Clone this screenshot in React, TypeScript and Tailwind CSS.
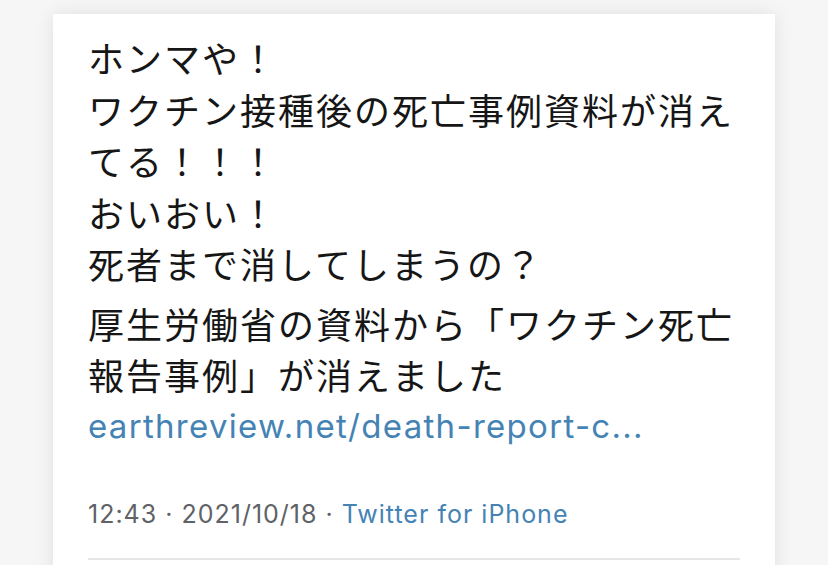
export default function App() {
  const jp = { fontFamily: '"Noto Sans CJK JP", "Noto Sans", sans-serif' }
  const latin = { fontFamily: 'Inter, "Noto Sans CJK JP", sans-serif' }
  return (
    <div className="h-[565px] overflow-hidden bg-[#f6f6f6] px-[53px] pt-[14px]">
      <div className="h-[600px] bg-white px-[35px] pt-[18px] shadow-[0_0_18px_rgba(0,0,0,0.09)]">
        <div className="text-[36px] leading-[51.5px] tracking-[2px] text-[#161616] whitespace-nowrap" style={jp}>
          <div>ホンマや！</div>
          <div>ワクチン接種後の死亡事例資料が消え</div>
          <div>てる！！！</div>
          <div>おいおい！</div>
          <div>死者まで消してしまうの？</div>
        </div>
        <div className="mt-[8px] text-[36px] leading-[51.5px] tracking-[2px] text-[#161616] whitespace-nowrap" style={jp}>
          <div>厚生労働省の資料から「ワクチン死亡</div>
          <div>報告事例」が消えました</div>
        </div>
        <div className="text-[33px] leading-[51.5px] tracking-[1.3px] text-[#4583b5] whitespace-nowrap" style={latin}>
          earthreview.net/death-report-c...
        </div>
        <div className="mt-[45px] text-[25px] leading-[34px] tracking-[1px] text-[#5f6266] whitespace-nowrap" style={latin}>
          12:43 · 2021/10/18 · <span className="text-[#4583b5]">Twitter for iPhone</span>
        </div>
        <div className="mt-[27px] h-[2px] bg-[#e6e6e6]" />
      </div>
    </div>
  )
}
